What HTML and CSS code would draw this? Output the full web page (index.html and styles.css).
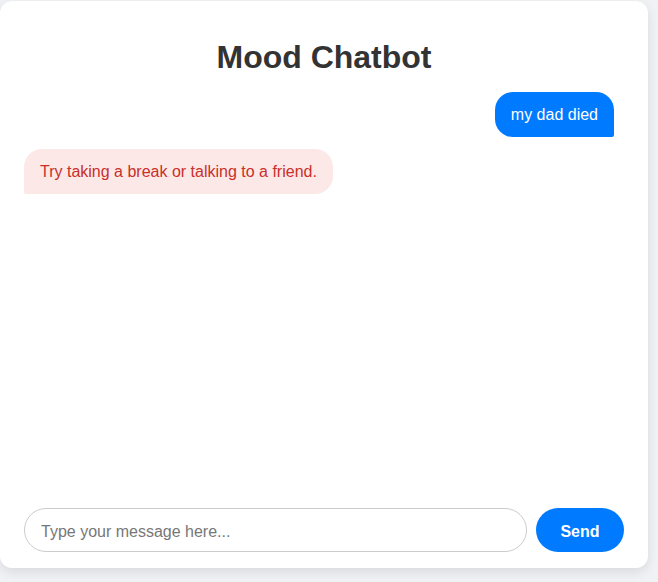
FILE: index.html
```html
<!DOCTYPE html>
<html lang="en">
<head>
<meta charset="utf-8">
<title>Mood Chatbot</title>
<link rel="stylesheet" href="styles.css">
</head>
<body>
<div class="card">
  <h1 class="title">Mood Chatbot</h1>
  <div class="chat">
    <div class="msg user">my dad died</div>
    <div class="msg bot">Try taking a break or talking to a friend.</div>
  </div>
  <form class="composer" onsubmit="return false">
    <input class="input" type="text" placeholder="Type your message here...">
    <button class="send" type="submit">Send</button>
  </form>
</div>
</body>
</html>
```
FILE: styles.css
```css
html, body {
  margin: 0;
  padding: 0;
}
body {
  background: #f0f2f5;
  font-family: "Liberation Sans", Arial, sans-serif;
  height: 582px;
  overflow: hidden;
}
.card {
  box-sizing: border-box;
  margin-top: 1px;
  width: 648px;
  height: 567px;
  background: #fff;
  border-radius: 12px;
  box-shadow: 0 4px 12px rgba(0, 0, 0, 0.1);
  padding: 24px 24px 16px;
  display: flex;
  flex-direction: column;
}
.title {
  margin: 14px 0 16px;
  font-size: 32px;
  line-height: 37px;
  font-weight: bold;
  color: #333;
  text-align: center;
}
.chat {
  flex: 1;
  display: flex;
  flex-direction: column;
  gap: 12px;
  padding-right: 10px;
}
.msg {
  font-size: 16px;
  line-height: 21px;
  padding: 12px 16px;
  max-width: 70%;
}
.user {
  align-self: flex-end;
  background: #007bff;
  color: #fff;
  border-radius: 18px 18px 2px 18px;
}
.bot {
  align-self: flex-start;
  background: #fde8e8;
  color: #c8302a;
  border-radius: 18px 18px 18px 2px;
}
.composer {
  display: flex;
  gap: 9px;
  margin: 0;
}
.input {
  flex: 1;
  box-sizing: border-box;
  height: 44px;
  border: 1px solid #ccc;
  border-radius: 22px;
  padding: 3px 16px 0;
  font-family: "Liberation Sans", Arial, sans-serif;
  font-size: 16px;
  color: #333;
  outline: none;
}
.input::placeholder {
  color: #777;
}
.send {
  box-sizing: border-box;
  width: 88px;
  height: 44px;
  border: none;
  border-radius: 22px;
  padding: 3px 0 0;
  background: #007bff;
  color: #fff;
  font-family: "Liberation Sans", Arial, sans-serif;
  font-size: 16px;
  font-weight: bold;
  cursor: pointer;
}
```
